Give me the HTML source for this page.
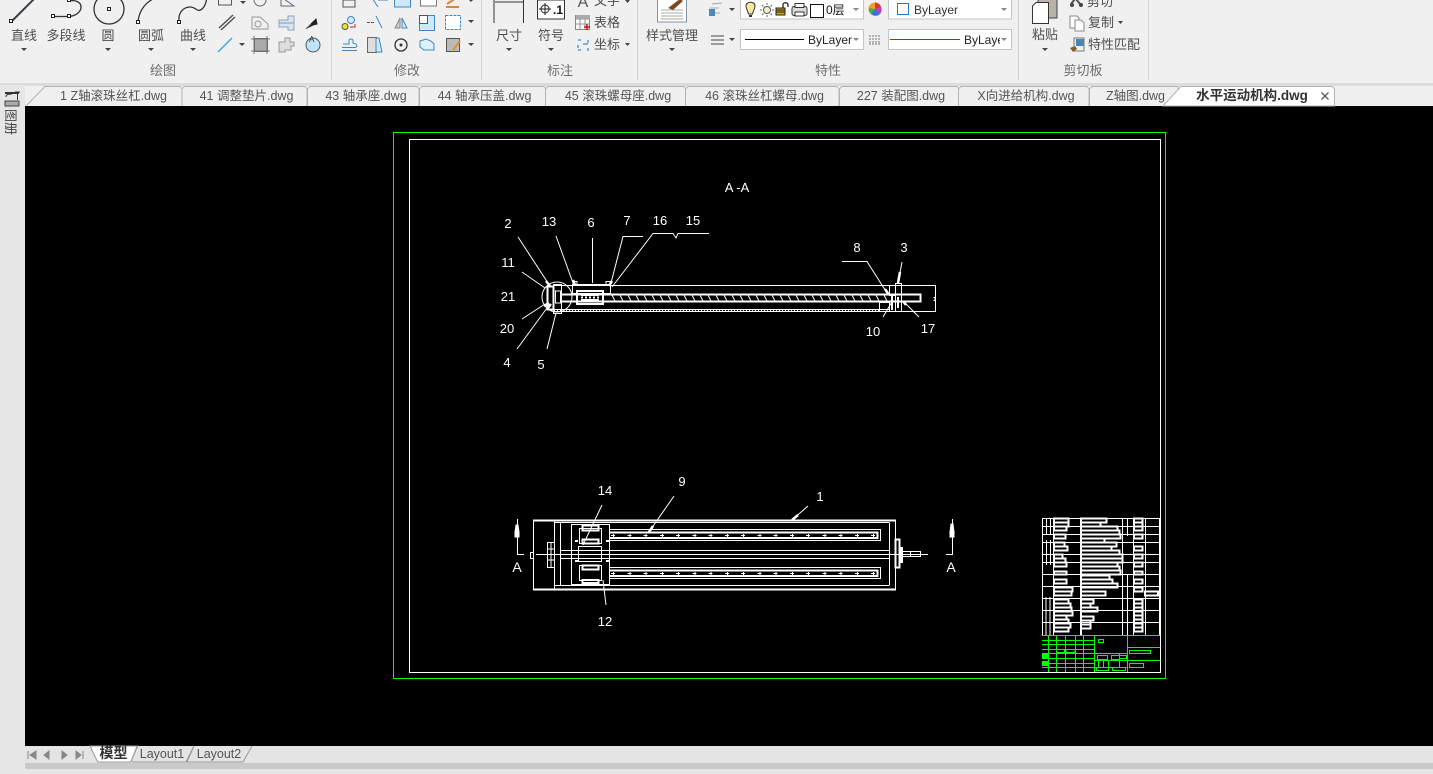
<!DOCTYPE html>
<html><head><meta charset="utf-8"><style>
html,body{margin:0;padding:0;background:#f0f0f0;width:1433px;height:774px;overflow:hidden}
svg{display:block;position:absolute;left:0;top:0}
text{font-family:"Liberation Sans","Noto Sans CJK SC",sans-serif}
.r text{font-size:13px;fill:#4f4f4f;text-anchor:middle}
.g text{font-size:13px;fill:#6e6e6e;text-anchor:middle}
.t text{font-size:12.500px;fill:#555;text-anchor:middle}
.d text{font-size:13px;fill:#fff;text-anchor:middle}
.k{fill:#444}
</style></head><body>
<svg width="1433" height="774" viewBox="0 0 1433 774" xmlns="http://www.w3.org/2000/svg">
<rect width="1433" height="774" fill="#f0f0f0"/>
<rect x="0" y="83" width="1433" height="3" fill="#dcdcdc"/>
<rect x="0" y="85" width="25" height="689" fill="#e6e6e6"/>
<rect x="25" y="106" width="1408" height="640" fill="#000"/>
<rect x="25" y="746" width="1408" height="17" fill="#e4e4e4"/>
<rect x="25" y="763" width="1408" height="6" fill="#c9c9c9"/>
<rect x="25" y="769" width="1408" height="5" fill="#e6e6e6"/>

<!-- ribbon dividers -->
<path d="M331.500 0V80M481.500 0V80M637.500 0V80M1018.500 0V80M1148.500 0V80" stroke="#d4d4d4" fill="none"/>

<!-- big draw icons -->
<g fill="none" stroke="#333" stroke-width="1.300">
<path d="M11 22L35-2" stroke-width="2" stroke="#3a3f48"/>
<path d="M53 16.500H69" />
<path d="M69 1C85-2 85 15 69 16.500"/>
<circle cx="109" cy="9" r="15"/>
<path d="M138 22C139 10 146 2 155-2"/>
<path d="M179 21C178 12 184 7 190 7C197 7 197 14 203 8C206 5 206 1 207-2"/>
</g>
<g fill="#fff" stroke="#222">
<rect x="9.500" y="19.500" width="3" height="3"/><rect x="51.500" y="14.500" width="3" height="3"/><rect x="67.500" y="14.500" width="3" height="3"/><rect x="67.500" y="-1.500" width="3" height="3"/>
<rect x="107.500" y="7.500" width="3" height="3"/><rect x="136.500" y="20.500" width="3" height="3"/><rect x="177.500" y="20.500" width="3" height="3"/>
</g>
<g class="r">
<text x="24" y="40">直线</text><text x="66" y="40">多段线</text><text x="108" y="40">圆</text><text x="151" y="40">圆弧</text><text x="193" y="40">曲线</text>
<text x="509" y="40">尺寸</text><text x="551" y="40">符号</text><text x="672" y="40">样式管理</text><text x="1045" y="39">粘贴</text>
<text x="607" y="27">表格</text><text x="607" y="49">坐标</text><text x="607" y="5">文字</text>
<text x="1101" y="27">复制</text><text x="1114" y="49">特性匹配</text><text x="1100" y="6">剪切</text>
</g>
<g class="g">
<text x="163" y="75">绘图</text><text x="407" y="75">修改</text><text x="560" y="75">标注</text><text x="828" y="75">特性</text><text x="1083" y="75">剪切板</text>
</g>
<!-- dropdown arrows -->
<path class="k" d="M21 48h6l-3 3zM105 48h6l-3 3zM148 48h6l-3 3zM190 48h6l-3 3zM240 1h6l-3 3zM239 43h6l-3 3zM468 20h6l-3 3zM468 43h6l-3 3zM468-1h6l-3 3zM506 48h6l-3 3zM548 48h6l-3 3zM669 48h6l-3 3zM1042 48h6l-3 3zM625 43h5l-2.500 3zM625 0h5l-2.500 3zM1118 21h5l-2.500 3zM729 8h6l-3 3zM729 38h6l-3 3z"/>

<!-- small draw icons -->
<g fill="none" stroke="#667">
<rect x="218.500" y="-4" width="13" height="9" stroke="#555"/>
<ellipse cx="260" cy="0" rx="6" ry="6"/>
<path d="M281 6V-3L294 6Z"/>
<path d="M219 28L233 15M221 30L235 17" stroke="#555" stroke-width="1.500"/>
<path d="M252 17H260L268 24V29H252Z" stroke="#999"/><circle cx="258" cy="24" r="3" stroke="#999"/>
<path d="M279 20H288V16H294V30H288V27H279Z" fill="#dbe4ec" stroke="#8fa3b8"/><path d="M279 23H294" stroke="#5ba6d8"/>
<path d="M218 52L232 38" stroke="#2fa8e8" stroke-width="1.300"/>
<rect x="254.500" y="38.500" width="13" height="13" fill="#aaa" stroke="#666"/>
<path d="M254 36V54M267 36V54M251 39H270M251 51H270" stroke="#777"/>
<path d="M279 42H285V38H290V42H294V46H291V50H285V52H279Z" fill="#ddd" stroke="#999"/>
<circle cx="313" cy="45" r="7" fill="#bfe3f7" stroke="#555"/>
</g>
<path d="M307 28L316 19L317 24L313 25Z" fill="#222" stroke="#222"/>
<path d="M306 29L311 24" stroke="#666"/>
<text x="309" y="42" style="font-size:8px;fill:#333">A</text>

<!-- modify icons -->
<g fill="none" stroke="#3f88c5">
<path d="M343 0h12v7h-12z" stroke="#555"/>
<path d="M372-2L378 7M378 0H388" />
<rect x="394.500" y="-2" width="16" height="9" fill="#cfe8fa"/>
<rect x="420.500" y="-2" width="16" height="8" stroke="#777" fill="#fff"/>
<path d="M447 4L456-2M446 7H459" stroke="#d8892f" stroke-width="2"/>
<circle cx="351" cy="20" r="3.500" fill="#cfe8fa"/>
<circle cx="345" cy="26.500" r="3" fill="#f3e12a" stroke="#555"/>
<path d="M350 27H355V24" stroke="#a33"/>
<path d="M367 22.500H374" stroke="#555" stroke-dasharray="3 1"/>
<path d="M376 16L382 28"/>
<path d="M400 18V28H395Z" fill="#ccc" stroke="#888"/><path d="M402 18V28H407Z" fill="#cfe8fa"/>
<rect x="419.500" y="15.500" width="15" height="15" fill="#cfe8fa"/><rect x="419.500" y="15.500" width="8" height="8" fill="#fff" stroke="#555"/>
<rect x="445.500" y="15.500" width="15" height="14" fill="#fff" stroke-dasharray="3 1"/>
<path d="M342 50.500H357M342 47.500H355Q358 47 356 44L353 43V40Q351 38 349 40V44H343"/>
<rect x="367.500" y="37.500" width="9" height="15" fill="#ddd" stroke="#666"/><path d="M376 38H379L382 52H376Z" fill="#cfe8fa"/>
<circle cx="401" cy="45" r="6" stroke="#333" stroke-width="1.300"/><circle cx="401" cy="45" r="1" fill="#333" stroke="#333"/>
<path d="M420 41L426 39L431 41L434 44V50H424L420 47Z" fill="#dff0fb"/>
<rect x="446.500" y="38.500" width="13" height="13" fill="#bbb" stroke="#555"/>
<path d="M453 50L460 41" stroke="#e0902f" stroke-width="2"/>
</g>

<!-- annotation icons -->
<path d="M494 23V0M523.500 23V0M495 2H523" stroke="#333" fill="none"/>
<rect x="537.500" y="0" width="27" height="19" fill="#fff" stroke="#333"/>
<circle cx="545" cy="9" r="4" fill="none" stroke="#222"/><path d="M539 9H551M545 3V15" stroke="#222"/>
<text x="558" y="14" style="font-size:12px;font-weight:bold;fill:#111;text-anchor:middle">.1</text>
<text x="583" y="7" style="font-size:16px;fill:#555;text-anchor:middle">A</text>
<rect x="575.500" y="15.500" width="14" height="14" fill="#f7f7f7" stroke="#888"/><path d="M576 19H589M576 24H589M580 16V29M585 16V29" stroke="#999"/><rect x="576" y="15" width="14" height="4" fill="#aaa"/><path d="M584 27H590M587 24V30" stroke="#c11" stroke-width="1.500"/>
<path d="M578 40h3M578 50h3M588 40v3M588 48v3M583 44h5M578 45v3" stroke="#5a9bd0" stroke-width="1.500" fill="none"/>

<!-- style manager -->
<rect x="657.500" y="-2" width="29" height="24" fill="#fff" stroke="#7e94a8"/>
<path d="M661 10H683M661 13H683M661 16H683M661 19H683" stroke="#aaa"/>
<path d="M668 8L680-1L683 1L673 10Z" fill="#7a4a22"/>

<!-- properties -->
<path d="M710 8H719M712 4L722 3M712 13H720" stroke="#aaa" fill="none"/><rect x="709" y="9" width="6" height="7" fill="#4c88ba"/>
<rect x="740.500" y="-2" width="123" height="21" fill="#fff" stroke="#c4c4c4"/>
<rect x="740.500" y="29.500" width="123" height="20" fill="#fff" stroke="#c4c4c4"/>
<rect x="888.500" y="-2" width="123" height="21" fill="#fff" stroke="#c4c4c4"/>
<rect x="888.500" y="29.500" width="123" height="20" fill="#fff" stroke="#c4c4c4"/>
<path d="M746 6C746 1 755 1 755 6C755 9 753 11 752.500 14H748.500C748 11 746 9 746 6Z" fill="#f7eaa0" stroke="#333"/><path d="M749 15H752V17H749Z" fill="#333"/>
<circle cx="767" cy="10" r="3.500" fill="#f6f0c8" stroke="#555"/><path d="M767 3V5M767 15V17M760 10H762M772 10H774M762 5L763.500 6.500M772 5L770.500 6.500M762 15L763.500 13.500M772 15L770.500 13.500" stroke="#666"/>
<rect x="776" y="8" width="9" height="7" fill="#c8a818" stroke="#222"/><path d="M776 10H785M776 12H785" stroke="#222"/><path d="M783 8V5C783 2 788 2 788 5V7" fill="none" stroke="#222" stroke-width="1.300"/>
<rect x="792" y="6.500" width="15" height="9" rx="2" fill="#ddd" stroke="#333"/><rect x="795" y="3.500" width="9" height="4" fill="#fff" stroke="#333"/><rect x="795" y="12" width="9" height="4" fill="#fff" stroke="#333"/>
<rect x="810.500" y="4.500" width="13" height="13" fill="#fff" stroke="#111"/>
<text x="826" y="14" style="font-size:12px;fill:#111;text-anchor:start">0层</text>
<path d="M853 8h6l-3 3zM853 38h6l-3 3zM1001 8h6l-3 3zM1001 38h6l-3 3z" fill="#888"/>
<path d="M711 36H724M711 40H724M711 44H724" stroke="#444" fill="none"/>
<rect x="745" y="39" width="59" height="1" fill="#000"/>
<text x="808" y="44" style="font-size:12px;fill:#222;text-anchor:start">ByLayer</text>
<rect x="890" y="39" width="70" height="1" fill="#ff0000"/>
<svg x="964" y="30" width="36" height="20"><text x="0" y="14" style="font-size:12px;fill:#222;text-anchor:start">ByLayer</text></svg>
<rect x="897.500" y="3.500" width="11" height="11" fill="#fff" stroke="#1f78c8"/>
<text x="914" y="14" style="font-size:12px;fill:#333;text-anchor:start">ByLayer</text>
<path d="M869 36H881M869 39H881M869 42H881M869 44H881" stroke="#777" stroke-dasharray="2 1"/>
<circle cx="875" cy="9" r="6.500" fill="#f0a020"/><path d="M875 9L875 2.500A6.500 6.500 0 0 1 881 7Z" fill="#e03030"/><path d="M875 9L881 7A6.500 6.500 0 0 1 880 14Z" fill="#c03cc0"/><path d="M875 9L880 14A6.500 6.500 0 0 1 871 14Z" fill="#3a70d8"/><path d="M875 9L871 14A6.500 6.500 0 0 1 869 8Z" fill="#40b050"/>

<!-- clipboard -->
<rect x="1038" y="-4" width="19" height="22" fill="#b9b2a8" stroke="#444"/>
<path d="M1032.500 6L1036 2.500H1048.500V23.500H1032.500Z" fill="#fff" stroke="#333"/>
<path d="M1071 4L1075-1M1080 4L1076-1" stroke="#555" stroke-width="2"/><circle cx="1072" cy="5" r="2" fill="#444"/><circle cx="1081" cy="5" r="2" fill="#444"/>
<path d="M1070 16H1077L1079 18V28H1070Z" fill="#fff" stroke="#888"/><path d="M1075 20H1081L1084 23V31H1075Z" fill="#fff" stroke="#888"/>
<rect x="1074" y="38" width="10" height="13" fill="#eee" stroke="#777"/><rect x="1076" y="39" width="8" height="7" fill="#4d84b5"/><path d="M1070 48L1075 46L1077 49L1073 52Z" fill="#8a5a2a"/>

<!-- tabs -->
<g fill="#f0f0f0" stroke="#b4b4b4">
<path d="M26 106L45 86.500H180L182 89V106"/>
<path d="M182 106V89L184 86.500H305L307 89V106"/>
<path d="M307.500 106V89L310 86.500H417L419 89V106"/>
<path d="M419.500 106V89L422 86.500H544L546 89V106"/>
<path d="M545.500 106V89L548 86.500H684L686 89V106"/>
<path d="M685.500 106V89L688 86.500H837L839 89V106"/>
<path d="M839.500 106V89L842 86.500H957L959 89V106"/>
<path d="M958.500 106V89L961 86.500H1087L1089 89V106"/>
<path d="M1089.500 106V89L1092 86.500H1178V106"/>
</g>
<path d="M1163 106L1181 86.500H1332L1334.500 89V106Z" fill="#fff" stroke="#b4b4b4"/>
<g class="t">
<text x="113.500" y="100">1 Z轴滚珠丝杠.dwg</text><text x="246.500" y="100">41 调整垫片.dwg</text><text x="366" y="100">43 轴承座.dwg</text><text x="484.500" y="100">44 轴承压盖.dwg</text><text x="618" y="100">45 滚珠螺母座.dwg</text><text x="764.500" y="100">46 滚珠丝杠螺母.dwg</text><text x="901" y="100">227 装配图.dwg</text><text x="1026" y="100">X向进给机构.dwg</text><text x="1135.500" y="100">Z轴图.dwg</text>
<text x="1252" y="100" style="font-weight:bold;fill:#333;font-size:13.500px">水平运动机构.dwg</text>
</g>
<path d="M1321.500 92.500L1328.500 99.500M1328.500 92.500L1321.500 99.500" stroke="#666" stroke-width="1.500"/>

<!-- left bar -->
<rect x="5" y="92" width="14" height="2" fill="#333"/><path d="M6 97C6 94 9 94 12 94M15 92H20M17.500 92V100" stroke="#333" fill="none"/><rect x="5" y="101" width="14" height="5" fill="#aaa" stroke="#444"/>
<text transform="translate(6 109) rotate(90)" x="0" y="0" style="font-size:13px;fill:#444">图</text>
<text transform="translate(6 122) rotate(90)" x="0" y="0" style="font-size:13px;fill:#444">册</text>

<!-- bottom tabs -->
<path d="M90 746L97.700 762H130.700L137.700 746Z" fill="#fff" stroke="#999"/>
<path d="M137 746L131 762M132 762H186L194 746M194 746L187 762H243L252 746" fill="none" stroke="#999"/>
<text x="113.500" y="758" style="font-size:14px;font-weight:bold;fill:#333;text-anchor:middle">模型</text>
<text x="162" y="758" style="font-size:12.500px;fill:#555;text-anchor:middle">Layout1</text>
<text x="219" y="758" style="font-size:12.500px;fill:#555;text-anchor:middle">Layout2</text>
<path d="M28 751v8M36 751v8l-6-4zM49 751v8l-5-4zM62 751v8l5-4zM76 751v8l5-4zM83 751v8" fill="#888" stroke="#888"/>

<!-- DRAWING -->
<g fill="none" shape-rendering="crispEdges">
<rect x="393.500" y="132.500" width="772" height="546" stroke="#0f0"/>
<rect x="409.500" y="139.500" width="751" height="533" stroke="#fff"/>
</g>
<g class="d">
<text x="737" y="192" style="font-size:13px;word-spacing:0">A -A</text>
<text x="508" y="228">2</text><text x="549" y="226">13</text><text x="591" y="227">6</text><text x="627" y="225">7</text><text x="660" y="225">16</text><text x="693" y="225">15</text>
<text x="508" y="267">11</text><text x="508" y="301">21</text><text x="507" y="333">20</text><text x="507" y="367">4</text><text x="541" y="369">5</text>
<text x="857" y="252">8</text><text x="904" y="252">3</text><text x="873" y="336">10</text><text x="928" y="333">17</text>
<text x="605" y="495">14</text><text x="682" y="486">9</text><text x="820" y="501">1</text><text x="517" y="572" style="font-size:14px">A</text><text x="951" y="572" style="font-size:14px">A</text><text x="605" y="626">12</text>
</g>
<g fill="none" stroke="#fff">
<!-- leaders -->
<path d="M518 237L548 283M522 272L545 288M522 319L545 304M517 349L547 308M547 349L556 313M556 236L573 283M592.500 238V283M643 236.500H623L611 283M709 233.500H678L676 238L673 233.500H653L612 287"/>
<path d="M842 261.500H867L887 293M902 262L898 283M883 317L893 300M919 317L903 301"/>
<path d="M602 505L583 545M674 496L649 532M808 506L792 520M603 580L606 605"/>
<path d="M546 281L550 286M544 306L549 303M547 309L551 304M573 280L575 285M609 286L612 281M885 289L889 295M900 272L898 283M903 301L906 305M649 532L653 526M792 520L798 515" stroke-width="2.500"/>
<!-- upper view -->
<g shape-rendering="crispEdges">
<path d="M553.500 285.500H935.500V311.500H553.500M553.500 309.500H890M935.500 285.500V311.500"/>
<path d="M560 294.500H920.500V301.500H560" stroke-width="2"/>
<path d="M920.500 294.500V301.500M933.500 297.500H935V300.500H933.500"/>
<rect x="572.500" y="284.500" width="38" height="9"/>
<rect x="577" y="291" width="26" height="13" stroke-width="2"/>
<path d="M581 295H599M581 300H599" stroke-width="2"/>
<path d="M581 297.500H599" stroke-width="2" stroke-dasharray="2 2"/>
<rect x="573" y="281.500" width="4" height="4"/><rect x="606" y="281.500" width="4" height="4"/>
<rect x="547.500" y="286.500" width="6" height="23" stroke-width="2"/><rect x="553.500" y="284.500" width="8" height="29"/>
<rect x="555.500" y="291" width="5" height="12"/>
<rect x="895.500" y="283.500" width="6" height="28"/><rect x="889.500" y="285.500" width="6" height="10"/><rect x="879.500" y="302.500" width="10" height="9"/>
<path d="M892 296V310M898 297V308" stroke-width="2"/>
</g>
<circle cx="557" cy="297" r="15"/>
<path stroke-dasharray="1 2" d="M554 310.500H880"/>
<path d="M612 295L615 301M620 295L623 301M628 295L631 301M636 295L639 301M644 295L647 301M652 295L655 301M660 295L663 301M668 295L671 301M676 295L679 301M684 295L687 301M692 295L695 301M700 295L703 301M708 295L711 301M716 295L719 301M724 295L727 301M732 295L735 301M740 295L743 301M748 295L751 301M756 295L759 301M764 295L767 301M772 295L775 301M780 295L783 301M788 295L791 301M796 295L799 301M804 295L807 301M812 295L815 301M820 295L823 301M828 295L831 301M836 295L839 301M844 295L847 301M852 295L855 301M860 295L863 301M868 295L871 301M876 295L879 301M884 295L887 301"/>
<!-- lower view -->
<g shape-rendering="crispEdges">
<rect x="533.500" y="520.500" width="362" height="69"/>
<path d="M533 520.500H896M533 589.500H896" stroke-width="2"/>
<path d="M554.500 520.500V589.500M560.500 523V585M889.500 523V585M554.500 522.500H889.500M554.500 585.500H889.500"/>
<path d="M609 529.500H880.500V540.500H609M609 567.500H880.500V578.500H609"/>
<path d="M609 532.500H877.500V538H609M609 570.500H877.500V576H609" stroke-width="2"/>
<path d="M560 550.500H889M560 558.500H889M536 554.500H928"/>
<rect x="571.500" y="524.500" width="38" height="60"/>
<rect x="579.500" y="528.500" width="22" height="15"/><rect x="579.500" y="565.500" width="22" height="15"/><rect x="578.500" y="546.500" width="23" height="15"/>
<rect x="582.500" y="525.500" width="16" height="5" stroke-width="2"/><rect x="582.500" y="539.500" width="16" height="4" stroke-width="2"/><rect x="582.500" y="565.500" width="16" height="4" stroke-width="2"/><rect x="582.500" y="580" width="16" height="3" stroke-width="2"/>
<rect x="547.500" y="542.500" width="7" height="25"/><path d="M551 542V567M548 549H554M548 560H554"/>
<rect x="530.500" y="552.500" width="3" height="6"/>
<rect x="895.500" y="539.500" width="4" height="28" stroke-width="2"/><rect x="899.500" y="547.500" width="3" height="15" fill="#fff"/><rect x="902.500" y="551.500" width="18" height="5"/>
<path d="M910.500 551V557"/>
<path d="M517.500 519V554.500H524M952.500 519V554.500H946"/>
<path d="M611 535.500H875M611 573.500H875" stroke-dasharray="4 12.250"/>
<path d="M613 535.500H875M613 573.500H875" stroke-width="3" stroke-dasharray="1 15.250"/>
<path d="M575 541h3M606 541h3M575 561h3M606 561h3" stroke-width="2"/>
</g>
<path d="M515 532H519L518 525H516ZM950 532H954L953 524H951Z" fill="#fff"/>
<rect x="515" y="532" width="4" height="5" fill="#fff"/><rect x="950" y="532" width="4" height="5" fill="#fff"/>
<!-- title block white -->
<g shape-rendering="crispEdges">
<rect x="1042.500" y="518.500" width="117" height="117"/>
<path d="M1053.500 518V635M1080.500 518V635M1081.500 518V635M1122.500 518V635M1133.500 518V635M1145.500 518V635M1127.500 518V536M1127.500 575V635M1046.500 518V535M1050.500 518V535M1046.500 540V565M1050.500 540V565M1046 597V635M1050 597V635"/>
<path d="M1042 526.500H1159M1042 534.500H1159M1042 542.500H1159M1042 554.500H1159M1042 562.500H1159M1042 574.500H1159M1042 586.500H1159M1042 598.500H1159M1042 610.500H1159M1042 622.500H1159"/>
<g stroke-width="2">
<path d="M1081 518.500H1106.500V522.500H1081ZM1081 522.500H1100.500V526.500H1081ZM1081 526.500H1117.500V530.500H1081ZM1081 530.500H1119.500V534.500H1081ZM1081 534.500H1120.500V538.500H1081ZM1081 538.500H1104.500V542.500H1081ZM1081 542.500H1116.500V546.500H1081ZM1081 546.500H1111.500V550.500H1081ZM1081 550.500H1119.500V554.500H1081ZM1081 554.500H1122.500V558.500H1081ZM1081 558.500H1122.500V562.500H1081ZM1081 562.500H1117.500V566.500H1081ZM1081 566.500H1119.500V570.500H1081ZM1081 570.500H1120.500V574.500H1081ZM1081 575.500H1109.500V579.500H1081ZM1081 579.500H1112.500V583.500H1081ZM1081 583.500H1117.500V587.500H1081ZM1081 591.500H1105.500V595.500H1081ZM1081 599.500H1093.500V603.500H1081ZM1081 603.500H1090.500V607.500H1081ZM1081 607.500H1097.500V611.500H1081ZM1081 616.500H1093.500V620.500H1081ZM1081 620.500H1090.500V624.500H1081ZM1081 624.500H1090.500V628.500H1081Z"/>
<path d="M1054 518.500H1068.500V522.500H1054ZM1054 522.500H1068.500V526.500H1054ZM1054 526.500H1066.500V530.500H1054ZM1054 534.500H1065.500V538.500H1054ZM1054 542.500H1064.500V546.500H1054ZM1054 546.500H1067.500V550.500H1054ZM1054 554.500H1062.500V558.500H1054ZM1054 558.500H1065.500V562.500H1054ZM1054 562.500H1066.500V566.500H1054ZM1054 571.500H1066.500V574.500H1054ZM1054 579.500H1066.500V583.500H1054ZM1054 587.500H1072.500V591.500H1054ZM1054 591.500H1071.500V595.500H1054ZM1054 599.500H1068.500V603.500H1054ZM1054 603.500H1070.500V607.500H1054ZM1054 607.500H1071.500V611.500H1054ZM1054 611.500H1072.500V615.500H1054ZM1054 615.500H1066.500V619.500H1054ZM1054 619.500H1068.500V623.500H1054ZM1054 623.500H1070.500V627.500H1054ZM1054 627.500H1068.500V631.500H1054Z"/>
<path d="M1134 518.500H1142.500V522.500H1134ZM1134 522.500H1142.500V526.500H1134ZM1134 526.500H1142.500V530.500H1134ZM1134 534.500H1142.500V538.500H1134ZM1134 546.500H1142.500V550.500H1134ZM1134 554.500H1142.500V558.500H1134ZM1134 562.500H1142.500V566.500H1134ZM1134 571.500H1142.500V574.500H1134ZM1134 579.500H1142.500V583.500H1134ZM1134 587.500H1142.500V591.500H1134ZM1134 599.500H1142.500V603.500H1134ZM1134 603.500H1142.500V607.500H1134ZM1134 607.500H1142.500V611.500H1134ZM1134 611.500H1142.500V615.500H1134ZM1134 615.500H1142.500V619.500H1134ZM1134 619.500H1142.500V623.500H1134ZM1134 623.500H1142.500V627.500H1134ZM1134 627.500H1142.500V631.500H1134ZM1145 591.500H1158V595.500H1145Z"/>
</g>
</g>
</g>
<!-- title block green -->
<g fill="none" stroke="#0f0" shape-rendering="crispEdges">
<path d="M1042 635.500H1160M1042 640.500H1094M1042 644.500H1094M1042 649.500H1094M1042 653.500H1127M1042 658.500H1094M1042 663.500H1094M1042 667.500H1127M1094 660.500H1127M1127 647.500H1160M1127 660.500H1160"/>
<path d="M1048.500 636V672M1056.500 636V672M1065.500 636V672M1075.500 636V672M1083.500 636V672M1094.500 636V672M1127.500 636V672M1098.500 660V667M1103.500 660V667M1108.500 660V667M1119.500 653V667"/>
<rect x="1098.500" y="639.500" width="5" height="3"/><rect x="1097.500" y="655.500" width="10" height="4"/><rect x="1111.500" y="655.500" width="8" height="4"/><rect x="1119.500" y="655.500" width="7" height="3"/><rect x="1096.500" y="667.500" width="12" height="3"/><rect x="1112.500" y="667.500" width="13" height="3"/>
<rect x="1129.500" y="650.500" width="21" height="3"/><rect x="1129.500" y="663.500" width="14" height="4"/>
<rect x="1042.500" y="653.500" width="6" height="4" fill="#0f0"/><rect x="1042.500" y="661.500" width="6" height="4" fill="#0f0"/><rect x="1056.500" y="649.500" width="8" height="3"/><rect x="1066" y="649.500" width="9" height="3"/>
</g>
<rect x="409" y="672" width="752" height="1" fill="#fff"/>
</svg>
</body></html>
